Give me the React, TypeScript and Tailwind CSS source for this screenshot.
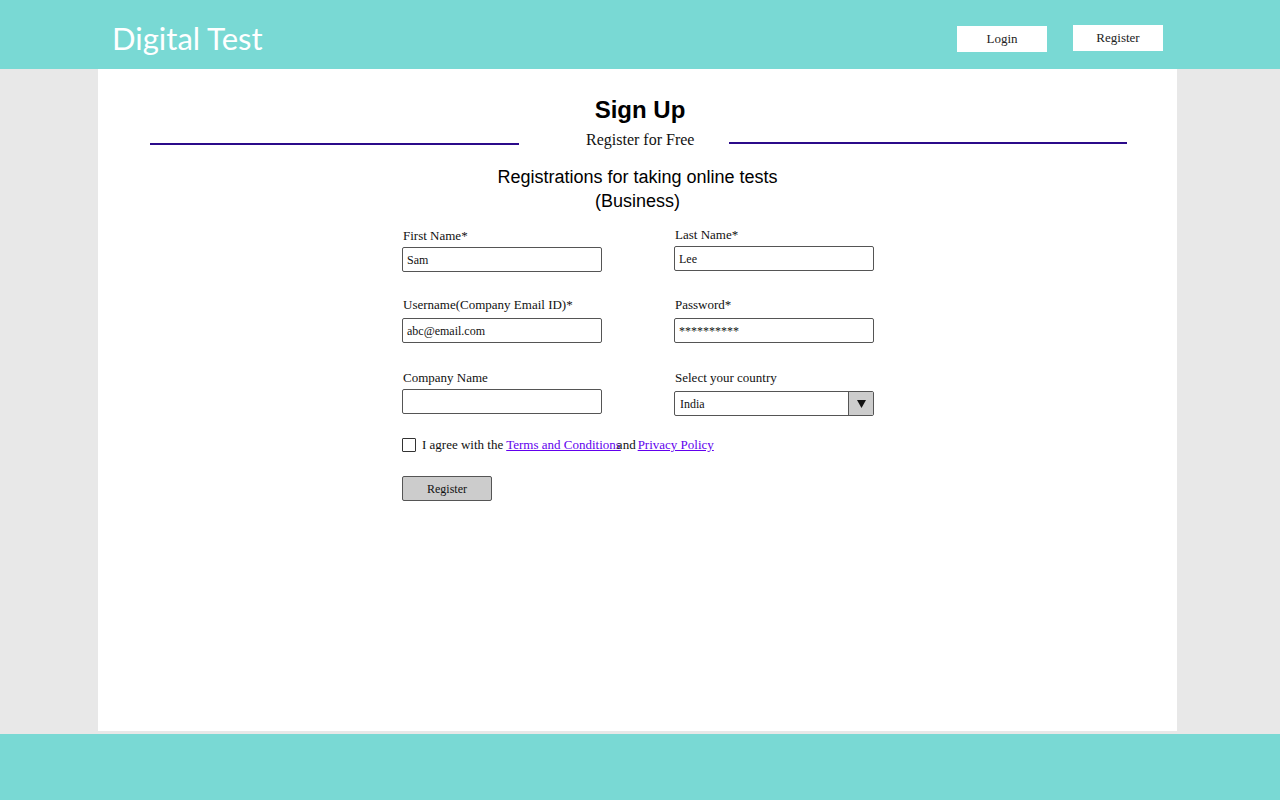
import React from "react";

const serif = "font-['Liberation_Serif',serif]";

function Field({
  label,
  value,
  className = "",
  labelGap = "mt-[3px]",
}: {
  label: string;
  value?: string;
  className?: string;
  labelGap?: string;
}) {
  return (
    <div className={`w-[200px] ${className}`}>
      <div className="h-4 leading-4 text-[13px] pl-px text-[#111]">{label}</div>
      <div
        className={`${labelGap} h-[25px] border border-[#555] rounded-[2px] bg-white flex items-center px-[4px] text-[12px] text-[#111]`}
      >
        {value}
      </div>
    </div>
  );
}

export default function App() {
  return (
    <div className="h-[800px] flex flex-col bg-[#e8e8e8]">
      {/* header */}
      <div className="h-[69px] shrink-0 bg-[#79d9d4] flex items-center justify-between pt-[7px] pl-[112px] pr-[117px]">
        <div className="text-white text-[31px] font-['Lato',sans-serif] leading-none">
          Digital Test
        </div>
        <div className={`flex items-center gap-x-[26px] text-[13px] text-[#222] ${serif}`}>
          <button className="w-[90px] h-[26px] bg-white flex items-center justify-center mt-[2px]">
            Login
          </button>
          <button className="w-[90px] h-[26px] bg-white flex items-center justify-center">
            Register
          </button>
        </div>
      </div>

      {/* main panel */}
      <div className="flex-1 flex">
        <div className="ml-[98px] w-[1079px] h-[662px] bg-white flex flex-col items-start">
          <div className="w-full text-center pt-[27px] leading-7 text-[24px] font-bold font-['Liberation_Sans',sans-serif] text-black pl-[5px]">
            Sign Up
          </div>
          <div className={`w-full flex items-center pl-[52px] h-5 mt-[6px] ${serif}`}>
            <div className="w-[369px] h-[2px] bg-[#2b0a8a] mt-[8px]" />
            <div className="w-[210px] pl-[67px] text-left text-[16px] leading-5 text-[#111]">
              Register for Free
            </div>
            <div className="w-[398px] h-[2px] bg-[#2b0a8a] mt-[6px]" />
          </div>
          <div className="w-full text-center mt-[15px] text-[18px] leading-6 font-['Liberation_Sans',sans-serif] text-black">
            <div>Registrations for taking online tests</div>
            <div>(Business)</div>
          </div>

          {/* form */}
          <div className={`ml-[304px] mt-[15px] flex flex-col ${serif}`}>
            <div className="flex gap-x-[72px]">
              <Field label="First Name*" value="Sam" />
              <Field label="Last Name*" value="Lee" className="-mt-px" />
            </div>
            <div className="flex gap-x-[72px] mt-[25px]">
              <Field label="Username(Company Email ID)*" value="abc@email.com" labelGap="mt-[5px]" />
              <Field label="Password*" value="**********" labelGap="mt-[5px]" />
            </div>
            <div className="flex gap-x-[72px] mt-[27px]">
              <Field label="Company Name" />
              <div className="w-[200px]">
                <div className="h-4 leading-4 text-[13px] pl-px text-[#111]">
                  Select your country
                </div>
                <div className="mt-[5px] h-[25px] border border-[#555] rounded-[2px] bg-white flex text-[12px] text-[#111]">
                  <div className="flex-1 flex items-center px-[5px]">India</div>
                  <div className="w-[25px] border-l border-[#555] bg-[#cccccc] flex items-center justify-center">
                    <svg width="9" height="8" viewBox="0 0 9 8">
                      <path d="M0 0 H9 L4.5 8 Z" fill="#111" />
                    </svg>
                  </div>
                </div>
              </div>
            </div>
            <div className="flex items-center mt-[22px] h-[14px] text-[13px] text-[#111]">
              <div className="w-[14px] h-[14px] border border-[#333] rounded-[1px] bg-white" />
              <span className="ml-[6px]">I agree with the</span>
              <a className="ml-[3px] text-[#6200ee] underline font-medium -mt-px">Terms and Conditions</a>
              <span className="-ml-[4px]">and</span>
              <a className="ml-[2px] text-[#6200ee] underline font-medium -mt-px">Privacy Policy</a>
            </div>
            <button className="mt-[24px] w-[90px] h-[25px] bg-[#cccccc] border border-[#555] rounded-[2px] text-[12px] text-[#111] flex items-center justify-center">
              Register
            </button>
          </div>
        </div>
      </div>

      {/* footer */}
      <div className="h-[66px] shrink-0 bg-[#79d9d4] mt-[3px]" />
    </div>
  );
}
